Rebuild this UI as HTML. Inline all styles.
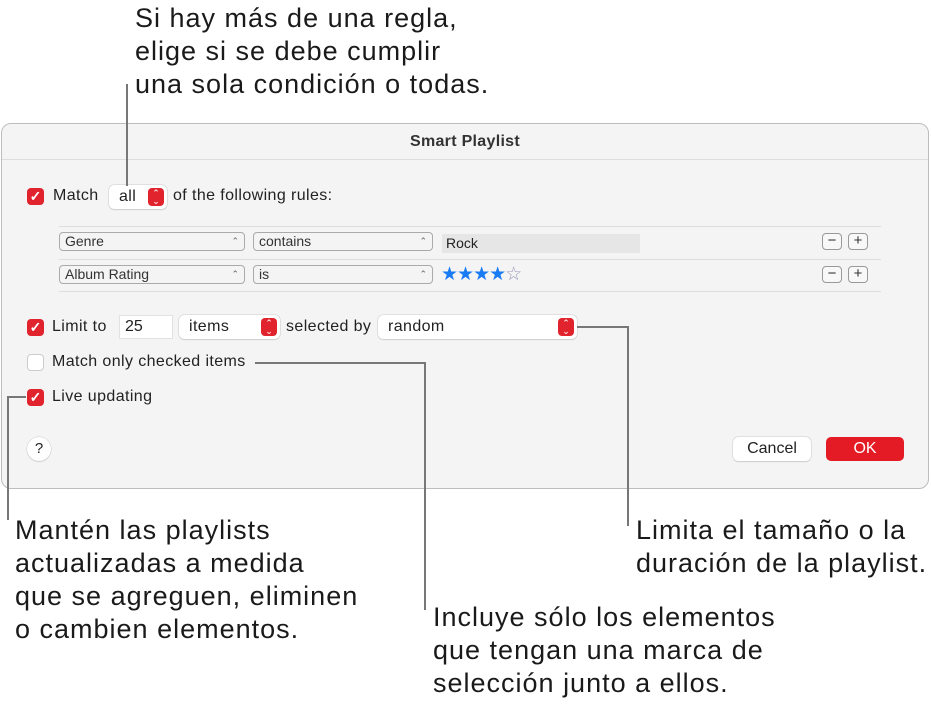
<!DOCTYPE html>
<html><head><meta charset="utf-8"><style>
*{margin:0;padding:0;box-sizing:border-box}
body{width:931px;height:708px;background:#fff;font-family:"Liberation Sans",sans-serif;position:relative;overflow:hidden;color:#222}
.a{position:absolute;font-size:27px;line-height:33px;letter-spacing:1px;color:#1a1a1a;white-space:nowrap}
.ln{position:absolute;background:#777}
.dlg{position:absolute;left:1px;top:123px;width:928px;height:366px;background:#f4f4f4;border:1px solid #bdbdbd;border-radius:10px}
.tb{position:absolute;left:0;top:0;right:0;height:36px;border-bottom:1px solid #ddd;text-align:center;font-size:16px;font-weight:bold;line-height:36px;color:#333;letter-spacing:.3px}
.t{position:absolute;font-size:16px;letter-spacing:.4px;color:#222;white-space:nowrap}
.cb{position:absolute;width:17px;height:17px;border-radius:4px;background:#e0232c;color:#fff;font-size:14px;line-height:17px;text-align:center;font-weight:bold}
.cbo{position:absolute;width:17px;height:17px;border-radius:4px;background:#fff;border:1px solid #ccc}
.pop{position:absolute;background:#fff;border-radius:5px;box-shadow:0 0 0 .5px #ccc,0 1px 1px rgba(0,0,0,.15);font-size:16px;letter-spacing:.4px;line-height:24px;padding-left:10px}
.st{position:absolute;right:3px;top:3px;width:16px;height:18px;border-radius:4px;background:#e0232c;color:#fff;font-size:9px;line-height:8px;text-align:center;padding-top:1px;letter-spacing:0}
.sel{position:absolute;height:19px;border:1px solid #aaa;border-radius:4px;font-size:14px;line-height:17px;padding-left:5px;color:#333}
.sel:after{content:"⌃";position:absolute;right:5px;top:0;font-size:9px;color:#666}
.hr{position:absolute;left:57px;width:822px;height:1px;background:#ddd}
.pm{position:absolute;width:20px;height:17px;border:1px solid #999;border-radius:4px;background:#f8f8f8;font-size:15px;line-height:14px;text-align:center;color:#333}
</style></head><body>
<div class="a" style="left:135px;top:2px">Si hay más de una regla,<br>elige si se debe cumplir<br>una sola condición o todas.</div>
<div class="dlg">
<div class="tb">Smart Playlist</div>
<div class="cb" style="left:25px;top:64px">✓</div>
<div class="t" style="left:51px;top:63px">Match</div>
<div class="pop" style="left:107px;top:61px;width:58px;height:24px">all<div class="st">⌃<br>⌄</div></div>
<div class="t" style="left:171px;top:63px">of the following rules:</div>
<div class="hr" style="top:102px"></div>
<div class="sel" style="left:57px;top:108px;width:186px">Genre</div>
<div class="sel" style="left:251px;top:108px;width:180px">contains</div>
<div style="position:absolute;left:440px;top:110px;width:198px;height:19px;background:#e6e6e6;font-size:14px;line-height:19px;padding-left:4px">Rock</div>
<div class="pm" style="left:820px;top:109px">−</div><div class="pm" style="left:846px;top:109px">+</div>
<div class="hr" style="top:135px"></div>
<div class="sel" style="left:57px;top:141px;width:186px">Album Rating</div>
<div class="sel" style="left:251px;top:141px;width:180px">is</div>
<div style="position:absolute;left:439px;top:139px;font-size:19px;color:#1a7cf5;letter-spacing:-1px">★★★★<span style="color:#99b">☆</span></div>
<div class="pm" style="left:820px;top:142px">−</div><div class="pm" style="left:846px;top:142px">+</div>
<div class="hr" style="top:167px"></div>
<div class="cb" style="left:25px;top:195px">✓</div>
<div class="t" style="left:50px;top:194px">Limit to</div>
<div style="position:absolute;left:117px;top:191px;width:54px;height:24px;background:#fff;border:1px solid #e2e2e2;font-size:16px;line-height:22px;padding-left:5px">25</div>
<div class="pop" style="left:177px;top:191px;width:101px;height:24px">items<div class="st">⌃<br>⌄</div></div>
<div class="t" style="left:284px;top:194px">selected by</div>
<div class="pop" style="left:376px;top:191px;width:199px;height:24px">random<div class="st">⌃<br>⌄</div></div>
<div class="cbo" style="left:25px;top:230px"></div>
<div class="t" style="left:50px;top:229px">Match only checked items</div>
<div class="cb" style="left:25px;top:265px">✓</div>
<div class="t" style="left:50px;top:264px">Live updating</div>
<div style="position:absolute;left:25px;top:313px;width:24px;height:24px;border-radius:50%;background:#fff;box-shadow:0 0 0 .5px #ccc,0 1px 1px rgba(0,0,0,.15);text-align:center;font-size:15px;line-height:24px">?</div>
<div style="position:absolute;left:731px;top:313px;width:78px;height:24px;border-radius:5px;background:#fff;box-shadow:0 0 0 .5px #ccc,0 1px 1px rgba(0,0,0,.15);text-align:center;font-size:16px;line-height:24px">Cancel</div>
<div style="position:absolute;left:824px;top:313px;width:78px;height:24px;border-radius:5px;background:#e41a24;color:#fff;text-align:center;font-size:16px;line-height:24px">OK</div>
</div>
<div class="ln" style="left:126px;top:84px;width:2px;height:102px"></div>
<div class="ln" style="left:7px;top:396px;width:19px;height:2px"></div>
<div class="ln" style="left:7px;top:396px;width:2px;height:124px"></div>
<div class="ln" style="left:255px;top:362px;width:171px;height:2px"></div>
<div class="ln" style="left:424px;top:362px;width:2px;height:248px"></div>
<div class="ln" style="left:577px;top:326px;width:52px;height:2px"></div>
<div class="ln" style="left:627px;top:326px;width:2px;height:200px"></div>
<div class="a" style="left:15px;top:514px">Mantén las playlists<br>actualizadas a medida<br>que se agreguen, eliminen<br>o cambien elementos.</div>
<div class="a" style="left:636px;top:514px">Limita el tamaño o la<br>duración de la playlist.</div>
<div class="a" style="left:433px;top:601px">Incluye sólo los elementos<br>que tengan una marca de<br>selección junto a ellos.</div>
</body></html>
